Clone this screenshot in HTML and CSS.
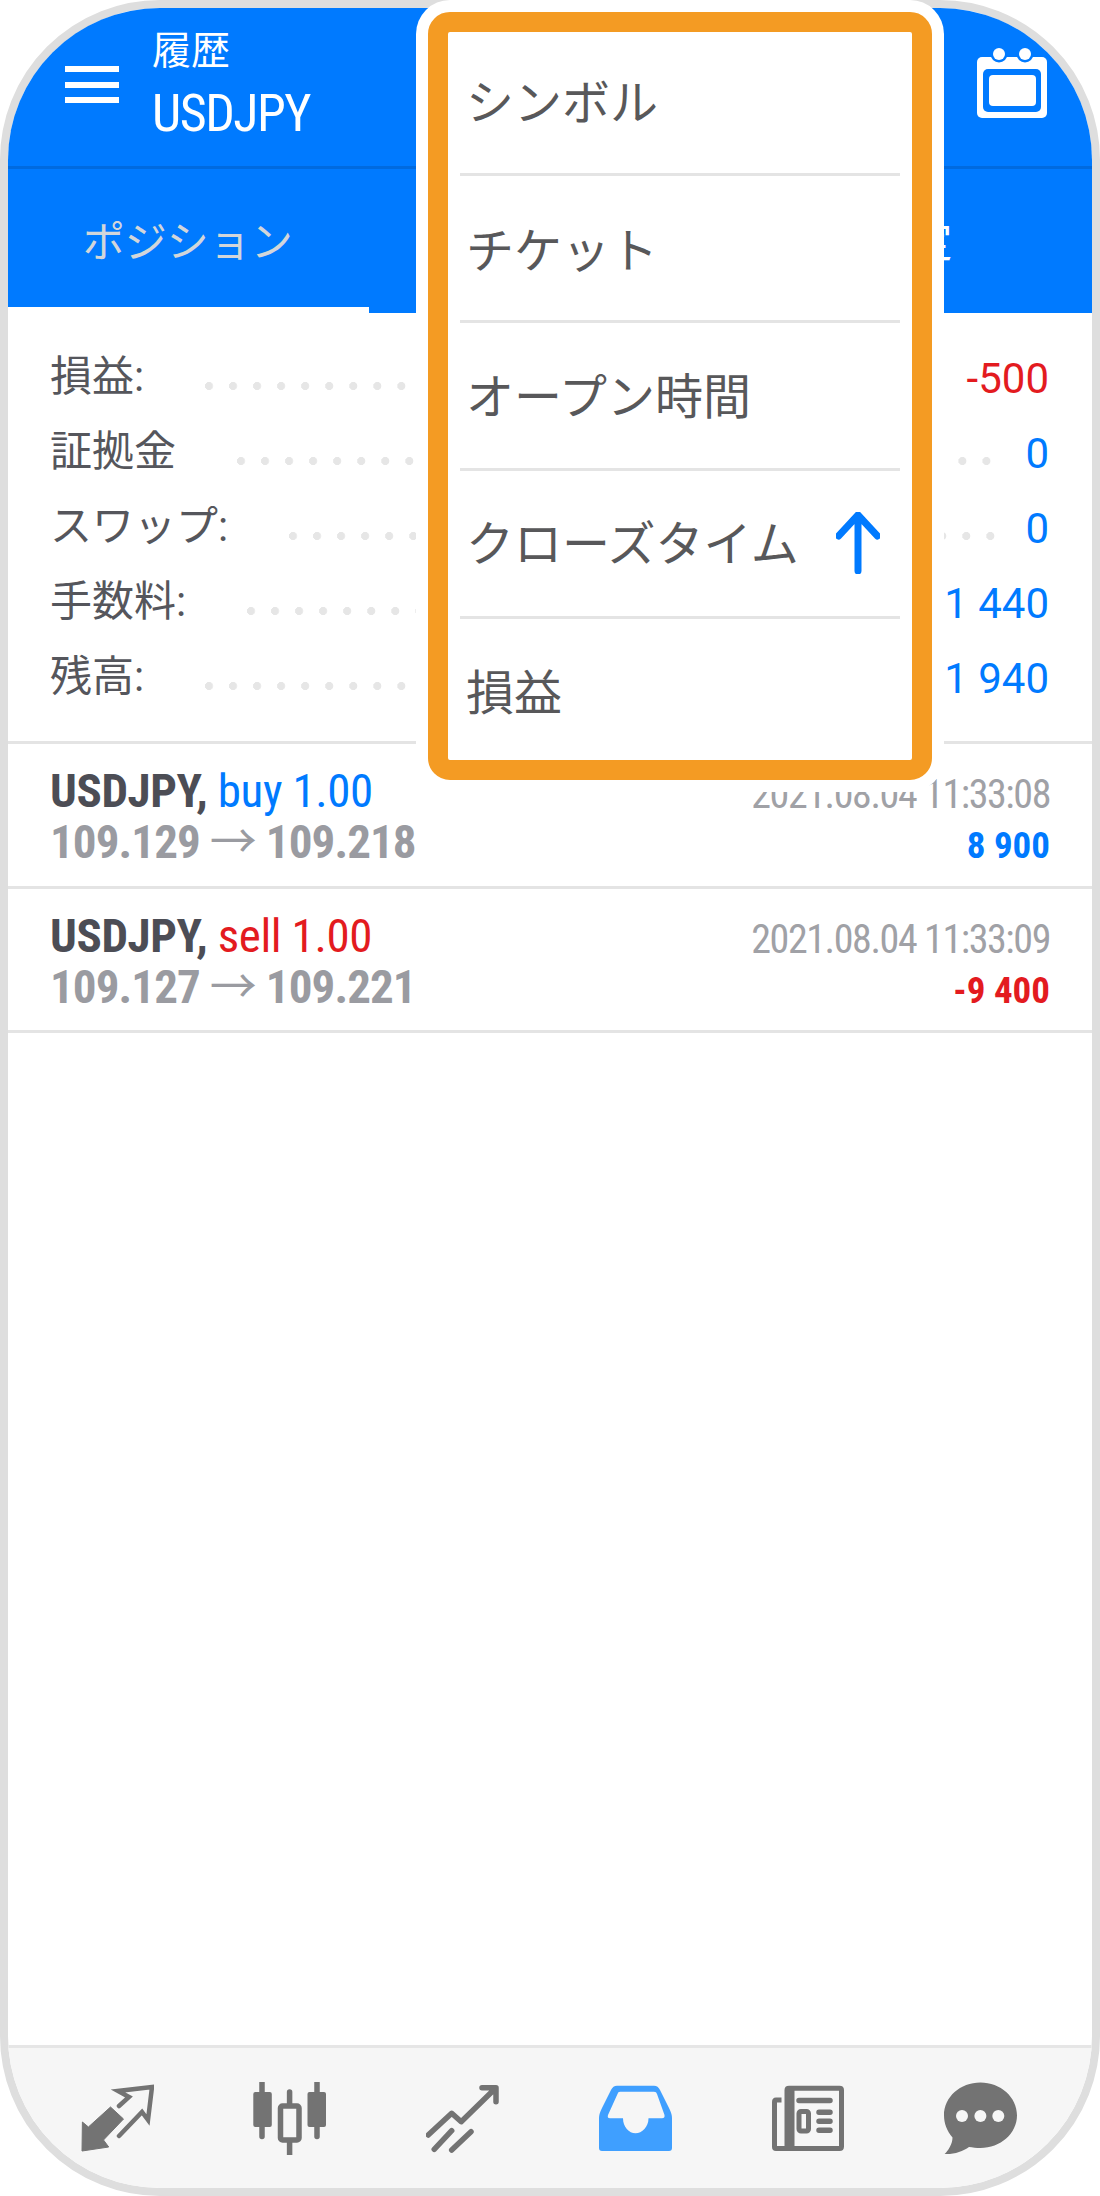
FILE: index.html
```html
<!DOCTYPE html>
<html lang="ja">
<head>
<meta charset="utf-8">
<title>履歴</title>
<link rel="stylesheet" href="styles.css">
</head>
<body>
<div class="screen">
  <div class="frame">
    <header class="appbar">
      <div class="burger"><span></span><span></span><span></span></div>
      <div class="title">
        <div class="title-top">履歴</div>
        <div class="title-main">USDJPY</div>
      </div>
      <svg class="calendar" width="70" height="70" viewBox="0 0 70 70">
        <rect x="0" y="9" width="70" height="61" rx="5" fill="#fff"/>
        <circle cx="22" cy="6" r="8.500" fill="#007aff"/>
        <circle cx="48" cy="6" r="8.500" fill="#007aff"/>
        <circle cx="22" cy="6" r="6" fill="#fff"/>
        <circle cx="48" cy="6" r="6" fill="#fff"/>
        <rect x="6" y="21" width="58" height="43" rx="5" fill="#007aff"/>
        <rect x="12" y="27" width="47" height="31" rx="4" fill="#fff"/>
      </svg>
    </header>
    <nav class="tabs">
      <div class="tab tab-dim">ポジション</div>
      <div class="tab"></div>
      <div class="tab">約定</div>
    </nav>
    <div class="tab-line"><div class="tab-line-bar"></div></div>
    <section class="summary">
      <div class="sum-row"><span>損益:</span><i class="dots"></i><b class="red">-500</b></div>
      <div class="sum-row"><span>証拠金</span><i class="dots"></i><b class="blue">0</b></div>
      <div class="sum-row"><span>スワップ:</span><i class="dots"></i><b class="blue">0</b></div>
      <div class="sum-row"><span>手数料:</span><i class="dots"></i><b class="blue">1 440</b></div>
      <div class="sum-row"><span>残高:</span><i class="dots"></i><b class="blue">1 940</b></div>
    </section>
    <section class="trades">
      <article class="trade trade-first">
        <div class="trade-left">
          <div class="line-a"><strong>USDJPY,</strong> <span class="blue">buy 1.00</span></div>
          <div class="line-b">109.129 <span class="arrow">→</span> 109.218</div>
        </div>
        <div class="trade-right">
          <div class="date">2021.08.04 11:33:08</div>
          <div class="pl blue">8 900</div>
        </div>
      </article>
      <article class="trade">
        <div class="trade-left">
          <div class="line-a"><strong>USDJPY,</strong> <span class="red">sell 1.00</span></div>
          <div class="line-b">109.127 <span class="arrow">→</span> 109.221</div>
        </div>
        <div class="trade-right">
          <div class="date">2021.08.04 11:33:09</div>
          <div class="pl red">-9 400</div>
        </div>
      </article>
    </section>
    <footer class="bottombar">
      <svg class="ico" viewBox="0 0 73 73">
        <path d="M1 69 1.4 40 7.4 45 29.5 25 42.5 37 22.5 58 27.7 65Z" fill="#737373" stroke="#737373" stroke-width="1" stroke-linejoin="round"/>
        <path d="M38 24 48 15 37 9 71 5 67 38 61 30 38 54" fill="none" stroke="#737373" stroke-width="4.5" stroke-linecap="round"/>
      </svg>
      <svg class="ico" viewBox="0 0 73 73">
        <path d="M9 0.5V54.5M64 0.5V54.5M36.6 10V73" stroke="#737373" stroke-width="5.5" stroke-linecap="round" fill="none"/>
        <rect x="0.3" y="10" width="18.5" height="35" rx="2" fill="#737373"/>
        <rect x="54.5" y="10" width="18.5" height="35" rx="2" fill="#737373"/>
        <rect x="27.5" y="24" width="18.5" height="34" rx="2" fill="#f6f6f6" stroke="#737373" stroke-width="5.5"/>
      </svg>
      <svg class="ico" viewBox="0 0 73 73">
        <path d="M2.2 53 25.7 31.3 35.2 39.7 69.5 6.3M56 5.7H70V19.7M25.7 48.7 8.2 67.3M45 49.7 25.7 68" fill="none" stroke="#737373" stroke-width="5.5" stroke-linecap="round" stroke-linejoin="round"/>
      </svg>
      <svg class="ico" viewBox="0 0 73 73">
        <path fill="#3f9fff" fill-rule="evenodd" d="M18 3.7H55Q59 3.7 61 8L70 26Q73 32 73 36V66Q73 69 70 69H3Q0 69 0 66V36Q0 32 3 26L12 8Q14 3.7 18 3.7ZM21 9.7Q19 9.7 18.500 12L9 33Q8 36.300 11 36.300H24C24 45 30 51.300 36.500 51.300S49.500 45 49.500 36.300H63Q66 36.300 65.500 33L58 12Q57.500 9.700 55 9.700Z"/>
      </svg>
      <svg class="ico" viewBox="0 0 73 73">
        <path d="M16 66.500V8Q16 6.200 18 6.200H68.500Q70.500 6.200 70.500 8V64.500Q70.500 66.500 68.500 66.500H5Q3.500 66.500 3.500 65V20Q3.500 18 5 18H10.500M21 66.500V6.500" fill="none" stroke="#737373" stroke-width="5"/>
        <path d="M28 18.500H59M48 30.300H59M48 39.300H59M48 48.300H59" fill="none" stroke="#737373" stroke-width="5.500" stroke-linecap="round"/>
        <rect x="28" y="29.500" width="9.500" height="19.500" rx="2" fill="none" stroke="#737373" stroke-width="5"/>
      </svg>
      <svg class="ico" viewBox="0 0 73 73">
        <path fill="#737373" d="M36.400 0.500C56.500 0.500 73 15 73 33.300S56.500 66 36.400 66C32.500 66 28.500 65.500 25 65C19 69.500 10 72.500 0.600 72C4 69 8.500 62 8.500 55.500C3 49 0 41.500 0 33.300C0 15 16.300 0.500 36.400 0.500Z"/>
        <circle cx="18" cy="34" r="6" fill="#f6f6f6"/>
        <circle cx="36.400" cy="34" r="6" fill="#f6f6f6"/>
        <circle cx="54.300" cy="34" r="6" fill="#f6f6f6"/>
      </svg>
    </footer>
  </div>
  <aside class="popup">
    <div class="popup-box">
      <div class="menu-row r1">シンボル</div>
      <div class="menu-row r2">チケット</div>
      <div class="menu-row r3">オープン時間</div>
      <div class="menu-row r4">クローズタイム
        <svg class="sort-arrow" width="44" height="62" viewBox="0 0 44 62"><path d="M22 59V3M2.500 24 22 3 41.500 24" fill="none" stroke="#007aff" stroke-width="7" stroke-linecap="round" stroke-linejoin="round"/></svg>
      </div>
      <div class="menu-row r5">損益</div>
    </div>
  </aside>
</div>
</body>
</html>
```
FILE: styles.css
```css
* { box-sizing: border-box; }
html, body { margin: 0; padding: 0; background: #fff; }
body { font-family: Roboto, "Noto Sans CJK JP", sans-serif; color: #55565c; }
.screen { position: relative; width: 1100px; height: 2196px; overflow: hidden; }
.frame {
  width: 1100px; height: 2196px;
  border: 8px solid #dedede; border-radius: 160px;
  overflow: hidden; display: flex; flex-direction: column; background: #fff;
}
.blue { color: #007aff; }
.red { color: #e31b1f; }

.appbar {
  flex: none; height: 161px; background: #007aff;
  border-bottom: 3px solid #006adf;
  display: flex; align-items: flex-start; padding-left: 57px; color: #fff;
}
.burger { width: 54px; margin-top: 58px; display: flex; flex-direction: column; gap: 9.500px; flex: none; }
.burger span { display: block; height: 6px; background: #fff; }
.title { margin-left: 33px; padding-top: 17px; }
.title-top { font-size: 39px; line-height: 52px; }
.title-main { font-size: 52px; line-height: 74px; font-stretch: 75%; letter-spacing: -1.500px; }
.calendar { margin-left: auto; margin-right: 45px; margin-top: 40px; flex: none; }

.tabs { flex: none; height: 138px; background: #007aff; display: grid; grid-template-columns: repeat(3, 1fr); }
.tab { display: flex; align-items: center; justify-content: center; color: #fff; font-size: 42px; padding-right: 2px; }
.tab-dim { color: #d2d6da; }
.tab-line { flex: none; height: 6px; display: flex; }
.tab-line-bar { margin-left: 361px; flex: 1; background: #007aff; }

.summary { flex: none; padding: 25px 43px 28px 42px; border-bottom: 3px solid #e4e4e4; }
.sum-row { height: 75px; display: flex; align-items: center; font-size: 42px; }
.sum-row span { margin-bottom: 7px; }
.sum-row b { font-weight: 400; font-size: 42px; margin-top: 5px; }
.dots {
  flex: 1; height: 8px; margin: 20px 30px 0 61px;
  background-image: radial-gradient(circle at 4px 4px, #e6e6e6 3.800px, transparent 4.300px);
  background-size: 24.050px 8px; background-repeat: repeat-x;
}

.trades { flex: 1; }
.trade {
  height: 144px; border-bottom: 3px solid #e4e4e4;
  display: flex; justify-content: space-between; padding: 0 42px;
}
.trade-first { height: 145px; }
.trade-left { padding-top: 21px; }
.trade-right { padding-top: 25px; text-align: right; }
.line-a, .line-b, .date, .pl { line-height: 51px; font-stretch: 75%; white-space: nowrap; }
.line-a { font-size: 47px; letter-spacing: -0.400px; }
.line-a strong { font-weight: 700; color: #4c4d55; }
.line-b { font-size: 47px; font-weight: 700; color: #9a9ba1; letter-spacing: -0.900px; }
.arrow { font-weight: 400; }
.date { font-size: 40px; color: #a0a1a6; letter-spacing: -1.400px; }
.pl { font-size: 37px; font-weight: 700; }

.bottombar {
  flex: none; height: 143px; background: #f6f6f6; border-top: 3px solid #e6e6e6;
  display: grid; grid-template-columns: repeat(6, 1fr); align-items: center; justify-items: center;
  padding: 0 25px 0 23px;
}
.ico { width: 73px; height: 73px; display: block; }

.popup { position: absolute; left: 416px; top: 0; width: 528px; height: 792px; background: #fff; border-radius: 34px; padding: 12px; }
.popup-box { height: 768px; border: 20px solid #f49b23; border-radius: 22px; display: flex; flex-direction: column; padding: 0 12px; overflow: hidden; }
.menu-row {
  display: flex; align-items: center; padding: 0 20px 5px 6px;
  font-size: 48px; color: #58585a; border-bottom: 3px solid #e4e4e4; height: 148px; flex: none;
}
.menu-row.r1 { height: 144px; padding-bottom: 7px; }
.menu-row.r2 { height: 147px; padding-bottom: 2px; }
.menu-row.r4 { padding-bottom: 7px; }
.menu-row.r5 { border-bottom: 0; height: 141px; padding-bottom: 2px; }
.sort-arrow { margin-left: auto; flex: none; margin-top: 6px; }
```
